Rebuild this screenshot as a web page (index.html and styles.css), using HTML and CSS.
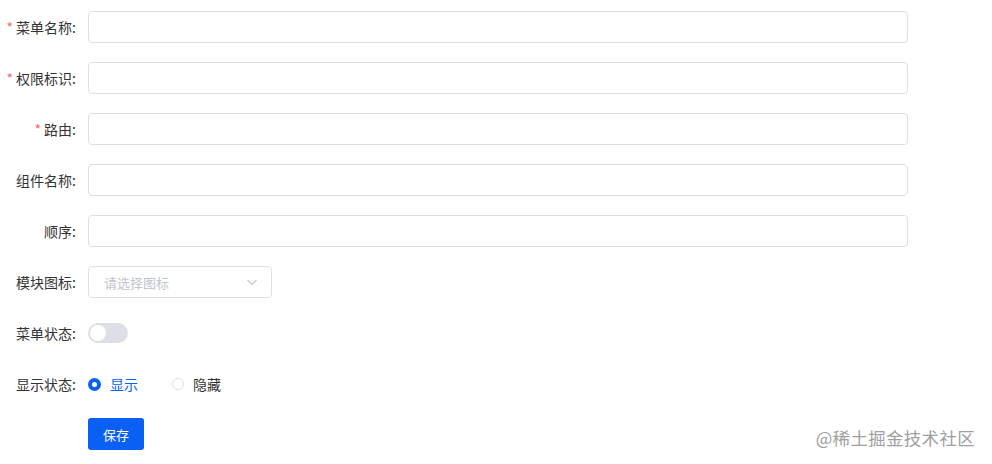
FILE: index.html
```html
<!DOCTYPE html>
<html lang="zh">
<head>
<meta charset="utf-8">
<link rel="stylesheet" href="styles.css">
</head>
<body>
<form class="form">
  <div class="item">
    <label class="label required">菜单名称:</label>
    <div class="control"><input class="input" type="text"></div>
  </div>
  <div class="item">
    <label class="label required">权限标识:</label>
    <div class="control"><input class="input" type="text"></div>
  </div>
  <div class="item">
    <label class="label required">路由:</label>
    <div class="control"><input class="input" type="text"></div>
  </div>
  <div class="item">
    <label class="label">组件名称:</label>
    <div class="control"><input class="input" type="text"></div>
  </div>
  <div class="item">
    <label class="label">顺序:</label>
    <div class="control"><input class="input" type="text"></div>
  </div>
  <div class="item">
    <label class="label">模块图标:</label>
    <div class="control">
      <div class="select">
        <span class="placeholder">请选择图标</span>
        <svg class="arrow" width="12" height="12" viewBox="0 0 12 12"><path d="M1.5 4 L6 8.5 L10.5 4" fill="none" stroke="#c0c4cc" stroke-width="1.1"/></svg>
      </div>
    </div>
  </div>
  <div class="item">
    <label class="label">菜单状态:</label>
    <div class="control">
      <span class="switch"><span class="knob"></span></span>
    </div>
  </div>
  <div class="item">
    <label class="label">显示状态:</label>
    <div class="control radios">
      <span class="radio checked"><span class="dot"></span><span class="rtext">显示</span></span>
      <span class="radio"><span class="dot"></span><span class="rtext">隐藏</span></span>
    </div>
  </div>
  <div class="item">
    <span class="label"></span>
    <div class="control"><button type="button" class="btn">保存</button></div>
  </div>
</form>
<div class="watermark">@稀土掘金技术社区</div>
</body>
</html>
```

FILE: styles.css
```css
html, body {
  margin: 0;
  padding: 0;
  background: #fff;
}
body {
  padding: 11px 8px 0 8px;
  font-family: "Noto Sans CJK SC", "Noto Sans", sans-serif;
  font-size: 14px;
  color: #333;
  position: relative;
  height: 464px;
  box-sizing: border-box;
  overflow: hidden;
}
.form {
  display: flex;
  flex-direction: column;
  gap: 19px;
  width: 900px;
}
.item {
  display: flex;
  align-items: center;
  height: 32px;
}
.label {
  width: 80px;
  flex: none;
  box-sizing: border-box;
  padding-right: 12px;
  display: flex;
  justify-content: flex-end;
  align-items: center;
  white-space: nowrap;
  color: #333;
  font-size: 14px;
  line-height: 32px;
}
.label.required::before {
  content: "*";
  color: #f56c6c;
  margin-right: 3px;
}
.control {
  flex: 1;
  display: flex;
  align-items: center;
}
.input {
  width: 820px;
  height: 32px;
  box-sizing: border-box;
  border: 1px solid #dcdfe6;
  border-radius: 4px;
  padding: 0 15px;
  outline: none;
  font-family: inherit;
  font-size: 14px;
  background: #fff;
}
.select {
  width: 184px;
  height: 32px;
  box-sizing: border-box;
  border: 1px solid #dcdfe6;
  border-radius: 4px;
  padding: 0 13px 0 15px;
  display: flex;
  align-items: center;
  justify-content: space-between;
}
.placeholder {
  color: #c0c4cc;
  font-size: 13px;
}
.switch {
  width: 40px;
  height: 20px;
  border-radius: 10px;
  background: #dcdfe6;
  display: flex;
  align-items: center;
  padding: 0 2px;
  box-sizing: border-box;
}
.knob {
  width: 16px;
  height: 16px;
  border-radius: 50%;
  background: #fff;
}
.radios {
  gap: 34px;
}
.radio {
  display: flex;
  align-items: center;
  gap: 9px;
  font-size: 14px;
  color: #333;
}
.dot {
  width: 12px;
  height: 12px;
  border-radius: 50%;
  border: 1px solid #dcdfe6;
  box-sizing: border-box;
  background: #fff;
}
.radio.checked .dot {
  border: 4px solid #0a5ff5;
  width: 13px;
  height: 13px;
}
.radio.checked .rtext {
  color: #0a5ff5;
}
.btn {
  width: 56px;
  height: 32px;
  border: none;
  border-radius: 3px;
  background: #0a5ff5;
  color: #fff;
  font-family: inherit;
  font-size: 13px;
  padding: 0;
  margin-top: -2px;
}
.watermark {
  position: absolute;
  right: 17px;
  bottom: 14px;
  font-size: 17.5px;
  color: #a0a0a0;
  letter-spacing: 0.3px;
}
```
